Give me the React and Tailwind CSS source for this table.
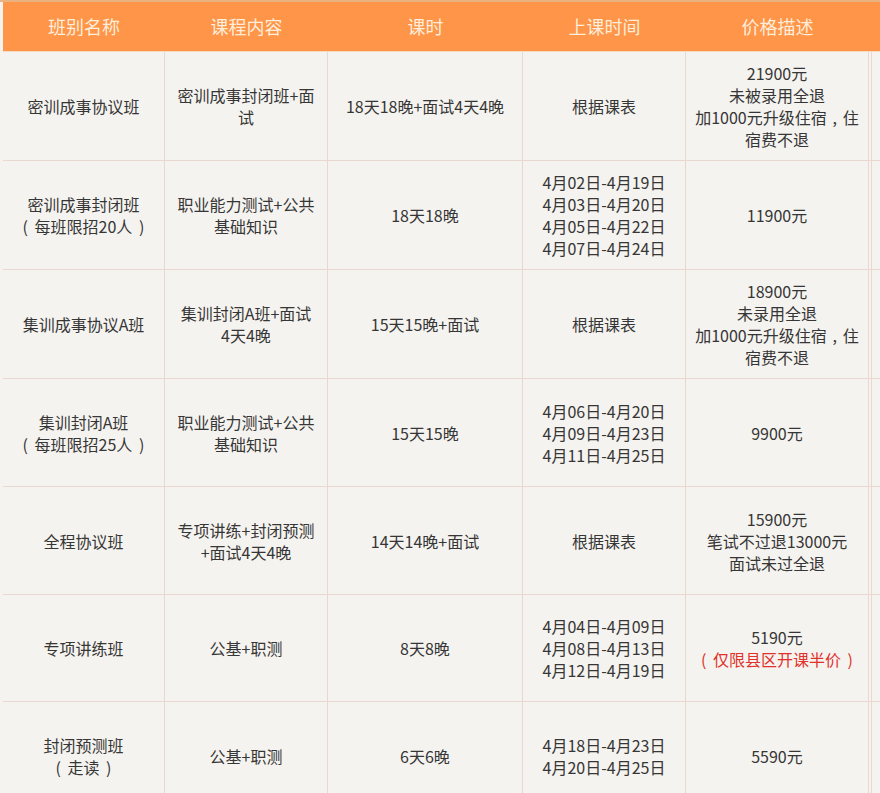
import React from "react";

const headers = ["班别名称", "课程内容", "课时", "上课时间", "价格描述"];

const rows = [
  {
    h: "h-[109px]",
    c: [["密训成事协议班"], ["密训成事封闭班+面", "试"], ["18天18晚+面试4天4晚"], ["根据课表"], ["21900元", "未被录用全退", "加1000元升级住宿，住", "宿费不退"]],
  },
  {
    h: "h-[109px]",
    c: [["密训成事封闭班", "（每班限招20人）"], ["职业能力测试+公共", "基础知识"], ["18天18晚"], ["4月02日-4月19日", "4月03日-4月20日", "4月05日-4月22日", "4月07日-4月24日"], ["11900元"]],
  },
  {
    h: "h-[109px]",
    c: [["集训成事协议A班"], ["集训封闭A班+面试", "4天4晚"], ["15天15晚+面试"], ["根据课表"], ["18900元", "未录用全退", "加1000元升级住宿，住", "宿费不退"]],
  },
  {
    h: "h-[108px]",
    c: [["集训封闭A班", "（每班限招25人）"], ["职业能力测试+公共", "基础知识"], ["15天15晚"], ["4月06日-4月20日", "4月09日-4月23日", "4月11日-4月25日"], ["9900元"]],
  },
  {
    h: "h-[108px]",
    c: [["全程协议班"], ["专项讲练+封闭预测", "+面试4天4晚"], ["14天14晚+面试"], ["根据课表"], ["15900元", "笔试不过退13000元", "面试未过全退"]],
  },
  {
    h: "h-[107px]",
    c: [["专项讲练班"], ["公基+职测"], ["8天8晚"], ["4月04日-4月09日", "4月08日-4月13日", "4月12日-4月19日"], ["5190元", { red: "（仅限县区开课半价）" }]],
  },
  {
    h: "h-[108px]",
    c: [["封闭预测班", "（走读）"], ["公基+职测"], ["6天6晚"], ["4月18日-4月23日", "4月20日-4月25日"], ["5590元"]],
  },
];

const widths = ["w-[162px]", "w-[163px]", "w-[195px]", "w-[163px]", "w-[183px]"];

function Line({ text }) {
  const parts = [];
  let buf = "";
  for (const ch of text) {
    if (ch === "（" || ch === "）" || ch === "，") {
      if (buf) parts.push(buf);
      buf = "";
      parts.push(ch);
    } else buf += ch;
  }
  if (buf) parts.push(buf);
  return (
    <>
      {parts.map((p, i) =>
        p === "（" ? (
          <span key={i} className="inline-block w-[12px] text-left">(</span>
        ) : p === "）" ? (
          <span key={i} className="inline-block w-[12px] text-right">)</span>
        ) : p === "，" ? (
          <span key={i} className="inline-block w-[16px] text-center">,</span>
        ) : (
          <span key={i}>{p}</span>
        )
      )}
    </>
  );
}

export default function App() {
  return (
    <div
      className="w-[880px] h-[793px] overflow-hidden bg-[#f6f2ee] pl-[3px]"
      style={{ fontFamily: '"Noto Sans CJK SC", "Noto Sans", sans-serif' }}
    >
      <div className="h-[2px] bg-[#e9b27f] -ml-[3px]" />
      <div className="flex h-[50px] bg-[#ff9548] border-b border-[#f7d9bf]">
        {headers.map((t, i) => (
          <div key={i} className={`${widths[i]} shrink-0 flex items-center justify-center text-[18px] text-[#fdeedc]`}>
            {t}
          </div>
        ))}
        <div className="flex-1" />
      </div>
      {rows.map((r, ri) => (
        <div key={ri} className={`flex ${r.h} shrink-0`}>
          {r.c.map((cell, ci) => (
            <div
              key={ci}
              className={`${widths[ci]} shrink-0 border-r border-b border-[#ead8d0] bg-[#f5f3ef] flex flex-col items-center justify-center text-center text-[16px] leading-[22px] text-[#363636] px-2`}
            >
              {cell.map((line, li) =>
                typeof line === "string" ? (
                  <div key={li} className="whitespace-nowrap"><Line text={line} /></div>
                ) : (
                  <div key={li} className="whitespace-nowrap text-[#e0312b]"><Line text={line.red} /></div>
                )
              )}
            </div>
          ))}
          <div className="w-[2px] shrink-0 border-b border-[#ead8d0] bg-[#f6f2ee]" />
          <div className="flex-1 border-l border-b border-[#ead8d0] bg-[#f5f3ef]" />
        </div>
      ))}
    </div>
  );
}
